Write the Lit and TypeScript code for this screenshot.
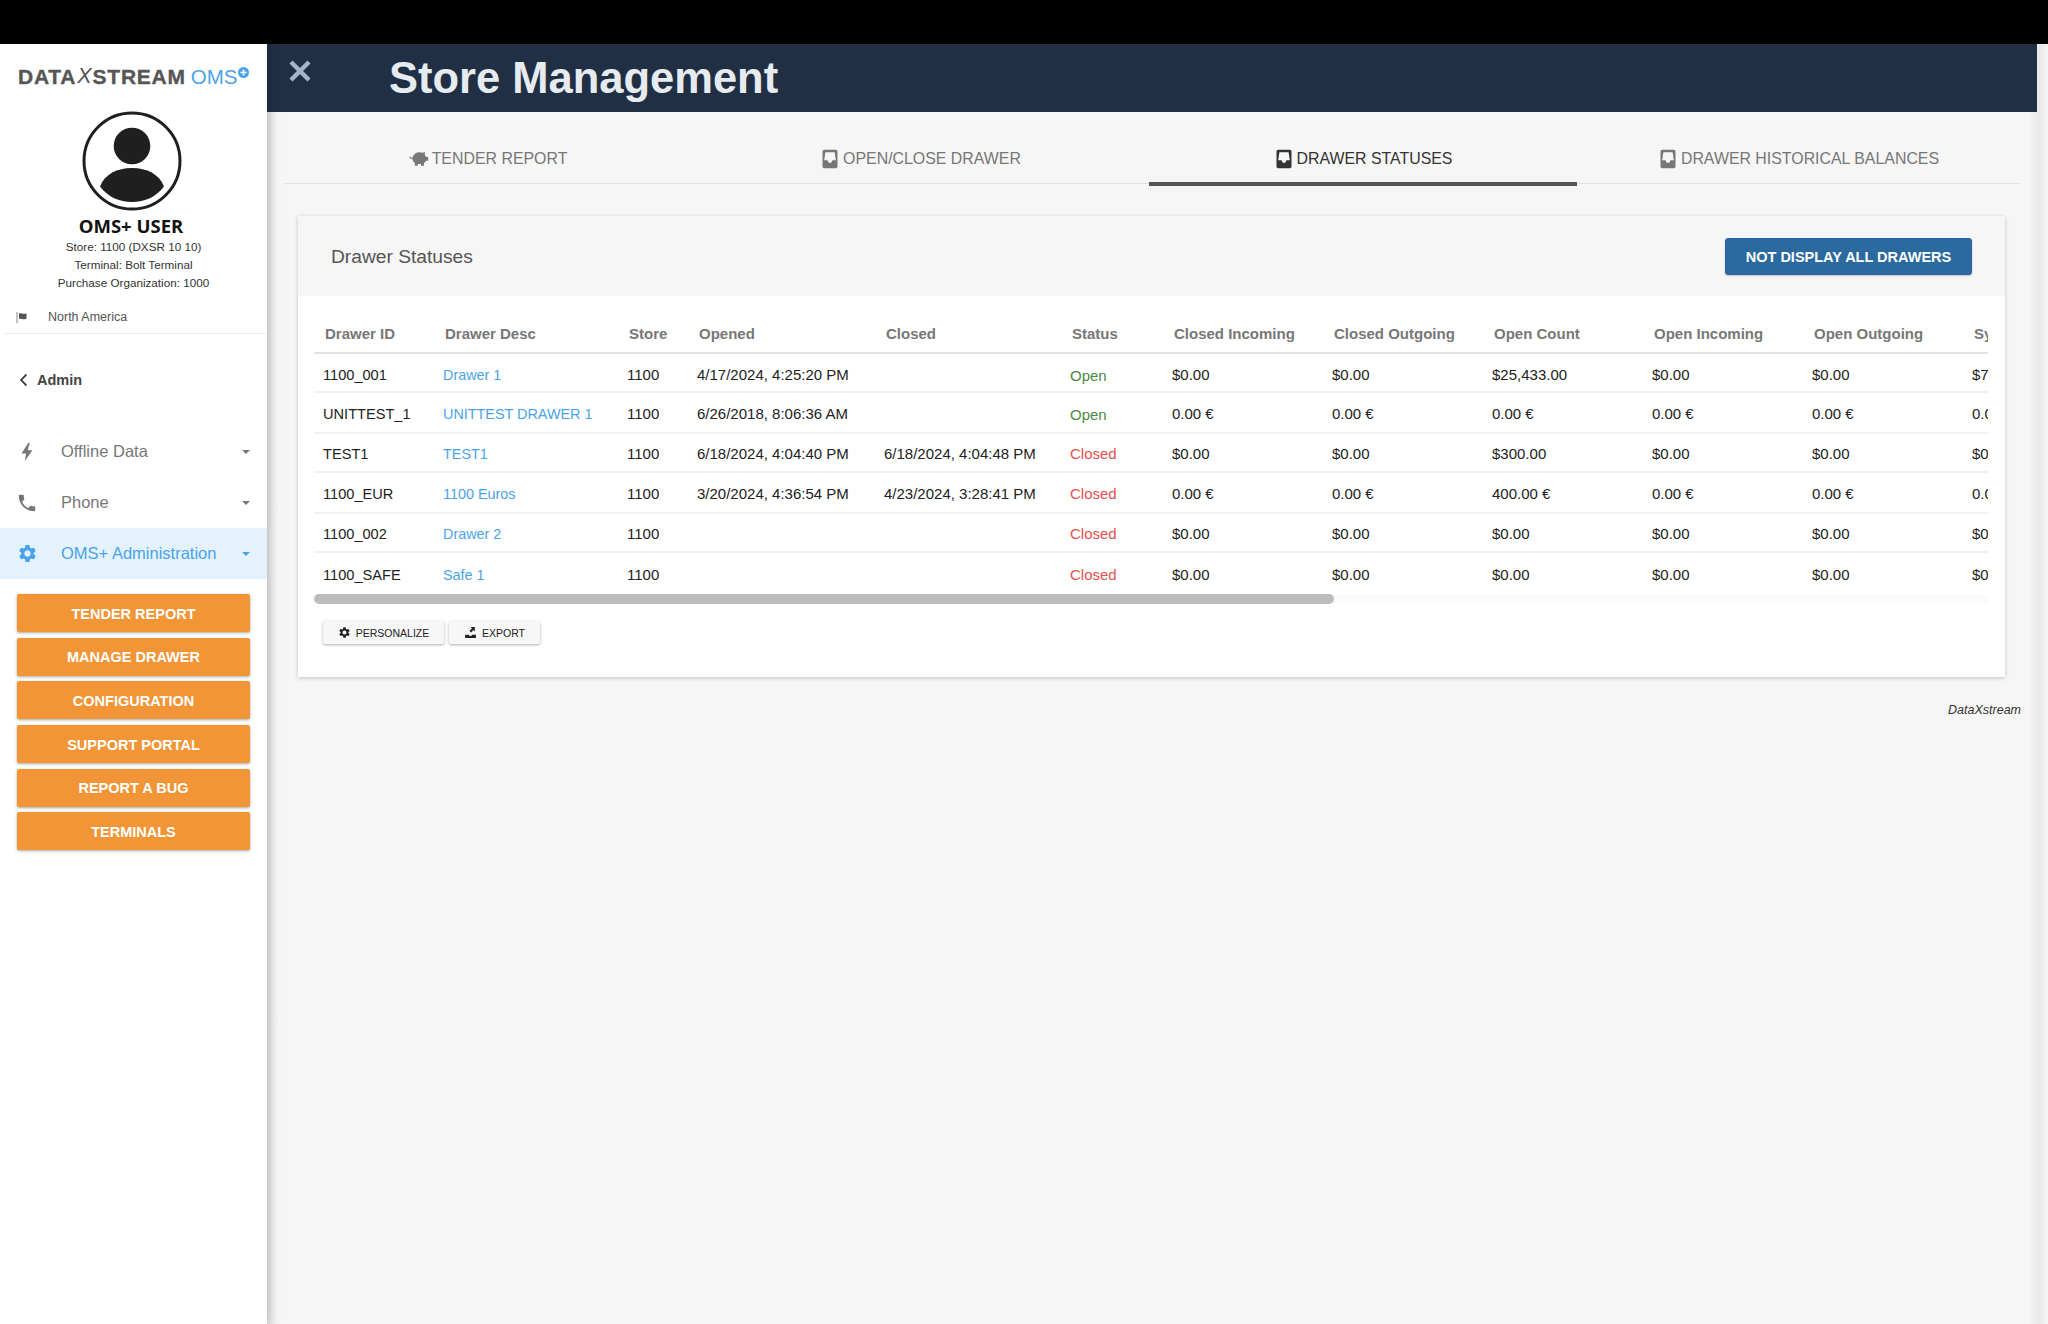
import { LitElement, html, css, svg } from "lit";
import { customElement } from "lit/decorators.js";

const gear = "M19.14 12.94c.04-.3.06-.61.06-.94 0-.32-.02-.64-.07-.94l2.03-1.58a.49.49 0 0 0 .12-.61l-1.92-3.32a.488.488 0 0 0-.59-.22l-2.39.96c-.5-.38-1.03-.7-1.62-.94l-.36-2.54a.484.484 0 0 0-.48-.41h-3.84c-.24 0-.43.17-.47.41l-.36 2.54c-.59.24-1.13.57-1.62.94l-2.39-.96c-.22-.08-.47 0-.59.22L2.74 8.87c-.12.21-.08.47.12.61l2.03 1.58c-.05.3-.09.63-.09.94s.02.64.07.94l-2.03 1.58a.49.49 0 0 0-.12.61l1.92 3.32c.12.22.37.29.59.22l2.39-.96c.5.38 1.03.7 1.62.94l.36 2.54c.05.24.24.41.48.41h3.84c.24 0 .44-.17.47-.41l.36-2.54c.59-.24 1.13-.56 1.62-.94l2.39.96c.22.08.47 0 .59-.22l1.92-3.32c.12-.22.07-.47-.12-.61l-2.01-1.58zM12 15.6c-1.98 0-3.6-1.62-3.6-3.6s1.62-3.6 3.6-3.6 3.6 1.62 3.6 3.6-1.62 3.6-3.6 3.6z";
const phone = "M6.62 10.79c1.44 2.83 3.76 5.14 6.59 6.59l2.2-2.2c.27-.27.67-.36 1.02-.24 1.12.37 2.33.57 3.57.57.55 0 1 .45 1 1V20c0 .55-.45 1-1 1-9.39 0-17-7.61-17-17 0-.55.45-1 1-1h3.5c.55 0 1 .45 1 1 0 1.25.2 2.45.57 3.57.11.35.03.74-.25 1.02l-2.2 2.2z";
const bolt = "M13.5 2 6 13.5h5L9.5 22 18 10h-5.2L15 2z";
const inbox = "M5 1h14a2 2 0 0 1 2 2v18a2 2 0 0 1-2 2H5a2 2 0 0 1-2-2V3a2 2 0 0 1 2-2zm1.5 3L5 13.500h4l1.500 3h3l1.500-3h4L17.500 4z";
const piggy = "M8 5c1.2-.8 2.8-1.2 4.5-1.2 1.4 0 2.7.3 3.8.8L19 3.5v3.6c.8.8 1.3 1.7 1.5 2.6H23v4.4h-2.7c-.5 1-1.2 1.9-2.3 2.6V20h-3.6v-1.9h-3.8V20H7v-3.4C5.2 15.400 4.200 13.500 4 11.800H2.500C1.400 11.800 .6 11 .6 9.800V9h1.200v.6c0 .6.300 1 .900 1H4.100C4.500 8.600 5.900 6.400 8 5z";
const exportIcon = "M2 16h7l1.500 2.500h3L15 16h7v6H2zM12 2h8v8l-2.600-2.600-4.400 4.400-2.800-2.800 4.400-4.400z";

const Ico = (d: string, size: number, cls = "") => html`<svg class=${cls} width=${size} height=${size} viewBox="0 0 24 24" fill="currentColor">${svg`<path d=${d} fill-rule="evenodd"></path>`}</svg>`;

interface Row { id: string; desc: string; opened: string; closed: string; status: string; ci: string; co: string; oc: string; oi: string; oo: string; sy: string; h: number; }
const rows: Row[] = [
  { id: "1100_001", desc: "Drawer 1", opened: "4/17/2024, 4:25:20 PM", closed: "", status: "Open", ci: "$0.00", co: "$0.00", oc: "$25,433.00", oi: "$0.00", oo: "$0.00", sy: "$7,433.00", h: 39 },
  { id: "UNITTEST_1", desc: "UNITTEST DRAWER 1", opened: "6/26/2018, 8:06:36 AM", closed: "", status: "Open", ci: "0.00 €", co: "0.00 €", oc: "0.00 €", oi: "0.00 €", oo: "0.00 €", sy: "0.00 €", h: 41 },
  { id: "TEST1", desc: "TEST1", opened: "6/18/2024, 4:04:40 PM", closed: "6/18/2024, 4:04:48 PM", status: "Closed", ci: "$0.00", co: "$0.00", oc: "$300.00", oi: "$0.00", oo: "$0.00", sy: "$0.00", h: 39 },
  { id: "1100_EUR", desc: "1100 Euros", opened: "3/20/2024, 4:36:54 PM", closed: "4/23/2024, 3:28:41 PM", status: "Closed", ci: "0.00 €", co: "0.00 €", oc: "400.00 €", oi: "0.00 €", oo: "0.00 €", sy: "0.00 €", h: 41 },
  { id: "1100_002", desc: "Drawer 2", opened: "", closed: "", status: "Closed", ci: "$0.00", co: "$0.00", oc: "$0.00", oi: "$0.00", oo: "$0.00", sy: "$0.00", h: 39 },
  { id: "1100_SAFE", desc: "Safe 1", opened: "", closed: "", status: "Closed", ci: "$0.00", co: "$0.00", oc: "$0.00", oi: "$0.00", oo: "$0.00", sy: "$0.00", h: 41 },
];
const cols = ["Drawer ID", "Drawer Desc", "Store", "Opened", "Closed", "Status", "Closed Incoming", "Closed Outgoing", "Open Count", "Open Incoming", "Open Outgoing", "Sys Count"];
const widths = [120, 184, 70, 187, 186, 102, 160, 160, 160, 160, 160, 160];
const actions = ["TENDER REPORT", "MANAGE DRAWER", "CONFIGURATION", "SUPPORT PORTAL", "REPORT A BUG", "TERMINALS"];
const tabs = [
  { t: "TENDER REPORT", i: piggy },
  { t: "OPEN/CLOSE DRAWER", i: inbox },
  { t: "DRAWER STATUSES", i: inbox, active: true },
  { t: "DRAWER HISTORICAL BALANCES", i: inbox },
];

@customElement("app-root")
export class AppRoot extends LitElement {
  static styles = css`
    :host { display: block; width: 2048px; height: 1324px; background: #000; overflow: hidden; font-family: "Liberation Sans", Arial, sans-serif; color: #222; }
    * { box-sizing: border-box; }
    .top { height: 44px; background: #000; }
    .shell { display: flex; height: 1280px; }
    .side { width: 267px; flex: none; background: #fff; box-shadow: 3px 0 7px rgba(0,0,0,.14); position: relative; z-index: 2; }
    .logo { display: flex; align-items: center; height: 21px; margin: 22px 0 0 18px; font-size: 21px; font-weight: 700; color: #565656; white-space: nowrap; letter-spacing: .75px; -webkit-text-stroke: .35px #565656; }
    .logo .x { font-weight: 400; font-style: italic; color: #555; font-size: 21.500px; margin: 0 1px; letter-spacing: 0; -webkit-text-stroke: 0; }
    .logo .oms { font-weight: 400; color: #4ea3e6; margin-left: 5px; letter-spacing: 0; font-size: 20.5px; -webkit-text-stroke: 0; }
    .logo svg { margin: -8px 0 0 1px; }
    .avatar { display: block; margin: 23px 0 0 81px; }
    .user { text-align: center; font-family: "Open Sans", sans-serif; font-weight: 700; font-size: 18.5px; line-height: 24px; color: #111; margin: 2px 5px 0 0; }
    .info { text-align: center; font-size: 11.700px; line-height: 18px; color: #333; margin: 0; }
    .region { display: flex; align-items: center; height: 34px; margin: 8px 0 0 3px; padding-left: 13px; gap: 20px; font-size: 12.500px; color: #555; border-bottom: 1px solid #eee; padding-top: 1px; }
    .back { display: flex; align-items: center; height: 47px; margin-top: 22px; padding-left: 19px; gap: 9px; font-size: 14.500px; font-weight: 700; color: #444; }
    .nav { margin-top: 23px; }
    .item { display: flex; align-items: center; height: 51px; padding-left: 16px; font-size: 16.500px; color: #777; }
    .item .lbl { margin-left: 23px; flex: 1; }
    .item .ic { width: 22px; display: flex; justify-content: center; }
    .item .caret { width: 0; height: 0; border-left: 4px solid transparent; border-right: 4px solid transparent; border-top: 4px solid currentColor; margin-right: 17px; }
    .item.on { background: #e3f2fd; color: #4aa3ea; }
    .acts { display: flex; flex-direction: column; gap: 5.700px; margin: 15px 17px 0 17px; }
    .act { height: 38px; display: flex; align-items: center; justify-content: center; background: #f19537; color: #fff; font-size: 14.500px; font-weight: 700; border-radius: 2px; box-shadow: 0 1px 3px rgba(0,0,0,.35); padding-top: 1px; }
    .main { flex: 1; min-width: 0; background: linear-gradient(to right, #e2e2e2 0, #f1f1f1 9px, #f6f6f6 14px, #f6f6f6 calc(100% - 20px), #e8e8e8 calc(100% - 8px), #f6f6f6 100%); }
    .head { height: 68px; margin-right: 11px; background: #212f44; display: flex; align-items: center; padding-left: 22px; }
    .close { margin-top: -15px; color: #a7b3c6; }
    .title { margin-left: 78px; font-size: 43.500px; font-weight: 700; color: #e6ebf0; padding-top: 1px; }
    .tabs { display: grid; grid-template-columns: 408px 457px 428px 443px; margin: 0 28px 0 17px; height: 72px; border-bottom: 1px solid #e2e2e2; }
    .tab { display: flex; align-items: center; justify-content: center; gap: 3px; font-size: 15.900px; color: #777; position: relative; padding-top: 22px; }
    .tab.active { color: #333; }
    .tab.active::after { content: ""; position: absolute; left: 0; right: 0; bottom: -3px; height: 4px; background: #555; }
    .card { margin: 32px 0 0 31px; width: 1707px; height: 461px; background: #fff; box-shadow: 0 1px 4px rgba(0,0,0,.22); }
    .card-head { height: 80px; background: #f6f6f6; display: flex; align-items: center; justify-content: space-between; padding: 0 33px; }
    .card-title { font-size: 19.200px; color: #555; padding-top: 1px; }
    .primary { height: 37px; width: 247px; display: flex; align-items: center; justify-content: center; background: #2a6a9e; border: 1px solid #2a62ad; border-radius: 3px; color: #fff; font-size: 14.500px; font-weight: 700; box-shadow: 0 1px 2px rgba(0,0,0,.2); padding-top: 1px; }
    .body { padding: 18px 16px 0 16px; }
    .clip { overflow: hidden; width: 1674px; }
    table { border-collapse: separate; border-spacing: 0; table-layout: fixed; width: 1809px; }
    th { height: 40px; padding: 0 0 0 11px; text-align: left; font-size: 15px; font-weight: 700; color: #777; border-bottom: 2px solid #e2e2e2; white-space: nowrap; overflow: hidden; }
    td { padding: 2px 0 0 9px; font-size: 15px; color: #222; border-bottom: 2px solid #f1f1f1; white-space: nowrap; }
    tr:first-child td { padding-top: 4px; }
    tr:last-child td { border-bottom: none; }
    td.id { font-size: 14.600px; }
    td.link { font-size: 14.400px; color: #4aa3e8; }
    .st { display: inline-block; padding-top: 2px; }
    .open { color: #4a8a44; }
    .closed { color: #e2504d; }
    .track { height: 10px; background: #fbfbfb; border-radius: 5px; }
    .thumb { height: 10px; width: 1020px; background: #bcbcbc; border-radius: 5px; }
    .tools { display: flex; gap: 5px; margin: 17px 0 0 9px; }
    .tool { height: 23px; display: flex; align-items: center; justify-content: center; gap: 5px; background: #f7f7f7; border-radius: 2px; font-size: 10.500px; color: #222; box-shadow: 0 1px 3px rgba(0,0,0,.32); }
    .tool.p { width: 121px; }
    .tool.e { width: 91px; }
    .foot { text-align: right; margin: 25px 27px 0 0; font-size: 12.500px; font-style: italic; color: #333; line-height: 16px; }
  `;

  render() {
    return html`
      <div class="top"></div>
      <div class="shell">
        <aside class="side">
          <div class="logo"><span>DATA</span><span class="x">X</span><span>STREAM</span><span class="oms">OMS</span>
            <svg width="11" height="11" viewBox="0 0 11 11"><circle cx="5.5" cy="5.5" r="5.5" fill="#4ea3e6"/><path d="M5.500 2.500v6M2.500 5.500h6" stroke="#fff" stroke-width="1.600"/></svg>
          </div>
          <svg class="avatar" width="102" height="102" viewBox="0 0 102 102">
            <circle cx="51" cy="51" r="48" fill="#fff" stroke="#1f1f1f" stroke-width="3"/>
            <circle cx="51" cy="36" r="18.300" fill="#1f1f1f"/>
            <path d="M19 76.500C24 64 36 58 51 58s27 6 32 18.500C75 87 64 92 51 92S27 87 19 76.500z" fill="#1f1f1f"/>
          </svg>
          <div class="user">OMS+ USER</div>
          <div class="info">Store: 1100 (DXSR 10 10)<br />Terminal: Bolt Terminal<br />Purchase Organization: 1000</div>
          <div class="region">
            <svg width="12" height="12" viewBox="0 0 12 12" fill="#555"><rect x="0.500" y="1" width="1" height="11" fill="#888"/><path d="M3 2.500c2-1 3.500.8 6.500 0h1V8h-1c-3 .8-4.500-1-6.500 0z"/></svg>
            <span>North America</span>
          </div>
          <div class="back">
            <svg width="9" height="14" viewBox="0 0 9 14" fill="none" stroke="#444" stroke-width="1.800"><path d="M7.500 1.500 2 7l5.500 5.500"/></svg>
            <span>Admin</span>
          </div>
          <div class="nav">
            <div class="item"><span class="ic">${Ico(bolt, 22)}</span><span class="lbl">Offline Data</span><span class="caret"></span></div>
            <div class="item"><span class="ic">${Ico(phone, 22)}</span><span class="lbl">Phone</span><span class="caret"></span></div>
            <div class="item on"><span class="ic">${Ico(gear, 21)}</span><span class="lbl">OMS+ Administration</span><span class="caret"></span></div>
          </div>
          <div class="acts">${actions.map((a) => html`<div class="act">${a}</div>`)}</div>
        </aside>
        <main class="main">
          <header class="head">
            <svg class="close" width="22" height="22" viewBox="0 0 22 22" fill="none" stroke="currentColor" stroke-width="4.500"><path d="M2 2l18 18M20 2 2 20"/></svg>
            <span class="title">Store Management</span>
          </header>
          <nav class="tabs">
            ${tabs.map((t) => html`<div class="tab ${t.active ? "active" : ""}">${Ico(t.i, 20)}<span>${t.t}</span></div>`)}
          </nav>
          <section class="card">
            <div class="card-head"><span class="card-title">Drawer Statuses</span><span class="primary">NOT DISPLAY ALL DRAWERS</span></div>
            <div class="body">
              <div class="clip">
                <table>
                  <colgroup>${widths.map((w) => html`<col style="width:${w}px" />`)}</colgroup>
                  <thead><tr>${cols.map((c) => html`<th>${c}</th>`)}</tr></thead>
                  <tbody>
                    ${rows.map((r) => html`<tr style="height:${r.h}px">
                      <td class="id">${r.id}</td><td class="link">${r.desc}</td><td>1100</td><td>${r.opened}</td><td>${r.closed}</td>
                      <td class="${r.status === "Open" ? "open" : "closed"}">${r.status === "Open" ? html`<span class="st">Open</span>` : r.status}</td>
                      <td>${r.ci}</td><td>${r.co}</td><td>${r.oc}</td><td>${r.oi}</td><td>${r.oo}</td><td>${r.sy}</td>
                    </tr>`)}
                  </tbody>
                </table>
              </div>
              <div class="track"><div class="thumb"></div></div>
              <div class="tools">
                <div class="tool p">${Ico(gear, 13)}<span>PERSONALIZE</span></div>
                <div class="tool e">${Ico(exportIcon, 13)}<span>EXPORT</span></div>
              </div>
            </div>
          </section>
          <div class="foot">DataXstream</div>
        </main>
      </div>
    `;
  }
}
